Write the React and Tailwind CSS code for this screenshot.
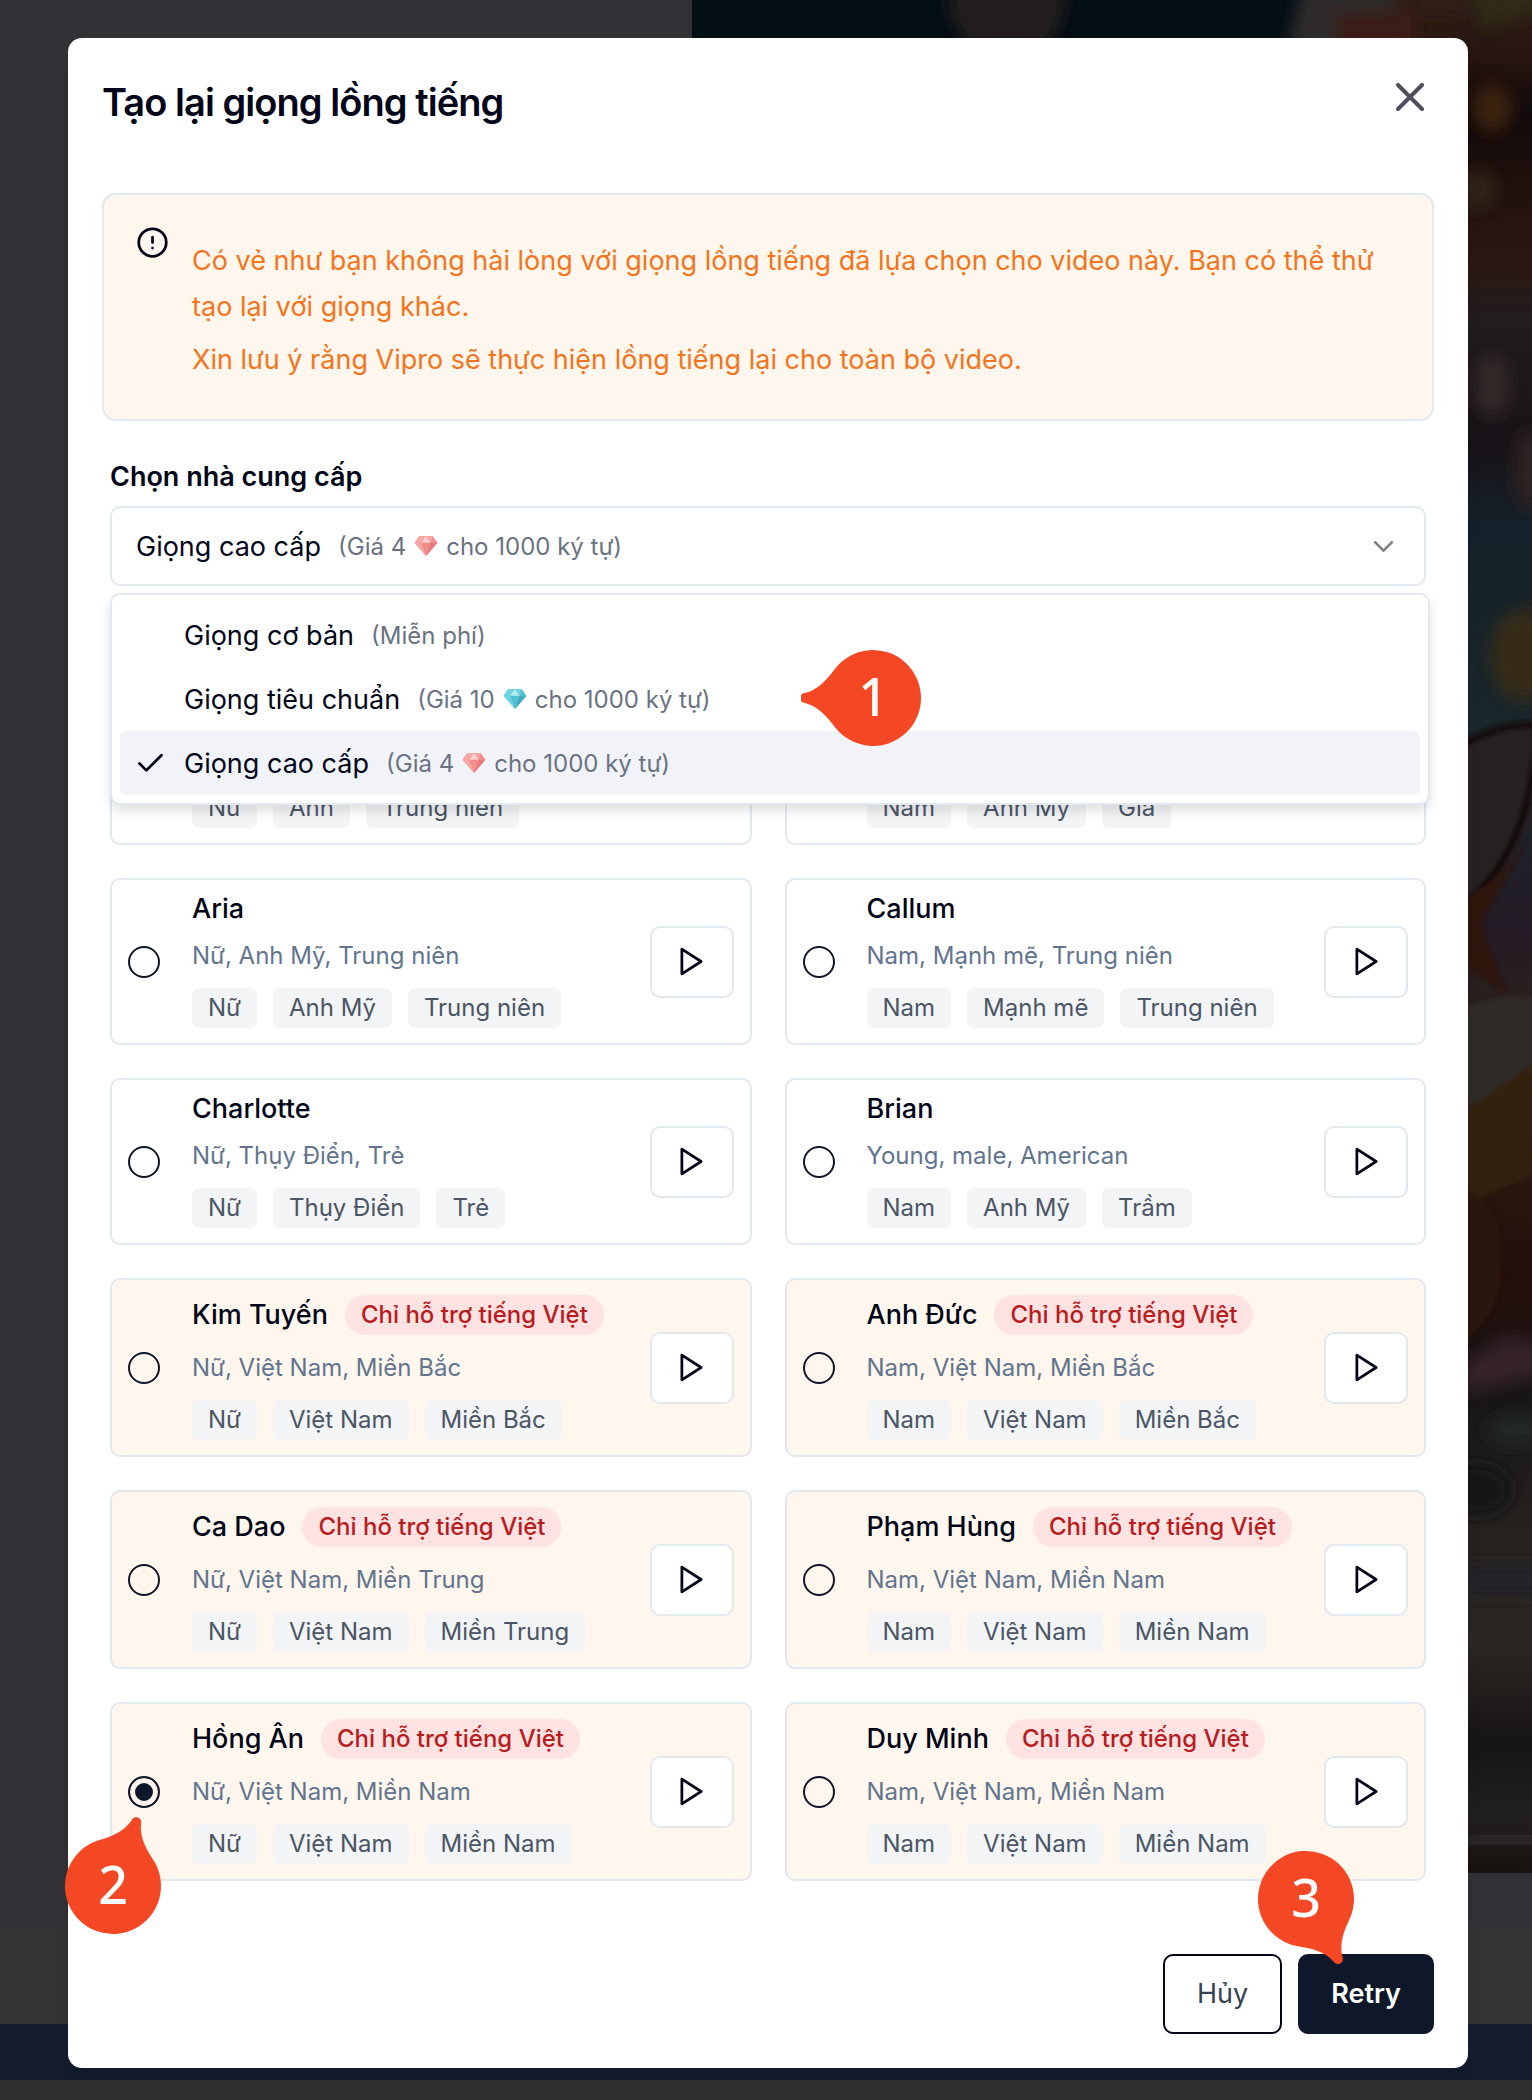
import { useState } from "react";
import { Check, ChevronDown, CircleAlert, X } from "lucide-react";

const VOICES = [
  { id: "v1", tags: ["Nữ", "Anh", "Trung niên"] },
  { id: "v2", tags: ["Nam", "Anh Mỹ", "Già"] },
  { id: "aria", name: "Aria", desc: "Nữ, Anh Mỹ, Trung niên", tags: ["Nữ", "Anh Mỹ", "Trung niên"] },
  { id: "callum", name: "Callum", desc: "Nam, Mạnh mẽ, Trung niên", tags: ["Nam", "Mạnh mẽ", "Trung niên"] },
  { id: "charlotte", name: "Charlotte", desc: "Nữ, Thụy Điển, Trẻ", tags: ["Nữ", "Thụy Điển", "Trẻ"] },
  { id: "brian", name: "Brian", desc: "Young, male, American", tags: ["Nam", "Anh Mỹ", "Trầm"] },
  { id: "kim-tuyen", name: "Kim Tuyến", desc: "Nữ, Việt Nam, Miền Bắc", tags: ["Nữ", "Việt Nam", "Miền Bắc"], viOnly: true },
  { id: "anh-duc", name: "Anh Đức", desc: "Nam, Việt Nam, Miền Bắc", tags: ["Nam", "Việt Nam", "Miền Bắc"], viOnly: true },
  { id: "ca-dao", name: "Ca Dao", desc: "Nữ, Việt Nam, Miền Trung", tags: ["Nữ", "Việt Nam", "Miền Trung"], viOnly: true },
  { id: "pham-hung", name: "Phạm Hùng", desc: "Nam, Việt Nam, Miền Nam", tags: ["Nam", "Việt Nam", "Miền Nam"], viOnly: true },
  { id: "hong-an", name: "Hồng Ân", desc: "Nữ, Việt Nam, Miền Nam", tags: ["Nữ", "Việt Nam", "Miền Nam"], viOnly: true },
  { id: "duy-minh", name: "Duy Minh", desc: "Nam, Việt Nam, Miền Nam", tags: ["Nam", "Việt Nam", "Miền Nam"], viOnly: true },
];

const PROVIDERS = [
  { id: "basic", name: "Giọng cơ bản" },
  { id: "standard", name: "Giọng tiêu chuẩn", price: "10", gem: "cyan" },
  { id: "premium", name: "Giọng cao cấp", price: "4", gem: "pink" },
];

const GEMS = {
  cyan: { light: "#b5eef5", mid: "#6fd3e2", base: "#55bfd2", dark: "#45a9bf" },
  pink: { light: "#fcd0cc", mid: "#f7a8a4", base: "#f28d8a", dark: "#e87b79" },
};

function Gem({ kind }) {
  const c = GEMS[kind];
  return (
    <svg viewBox="0 0 24 21" className="mx-2 inline-block h-5 w-6 align-[-1px]" aria-hidden="true">
      <path d="M5 0h14l5 7-12 14L0 7z" fill={c.base} />
      <path d="M0 7h7l5 14z" fill={c.mid} />
      <path d="M17 7h7L12 21z" fill={c.dark} />
      <path d="M5 0h7L7 7H0z" fill={c.mid} />
      <path d="M12 0l5 7H7z" fill={c.light} />
      <path d="M12 0h7l-2 7z" fill={c.mid} />
    </svg>
  );
}

function ProviderText({ provider }) {
  return (
    <span className="flex items-center gap-[17px] pt-[2px]">
      <span>{provider.name}</span>
      <span className="text-[24px] text-gray-500">
        {provider.gem ? (
          <>
            (Giá {provider.price}
            <Gem kind={provider.gem} />
            cho 1000 ký tự)
          </>
        ) : (
          "(Miễn phí)"
        )}
      </span>
    </span>
  );
}

/* Numbered callout: a 96px disc with a rounded tip, turned by `angle`. */
function Callout({ n, angle, className }) {
  return (
    <span className={"pointer-events-none absolute z-30 flex size-36 items-center justify-center " + className}>
      <svg viewBox="-72 -72 144 144" className="absolute inset-0 size-36" aria-hidden="true">
        <path
          transform={`rotate(${angle})`}
          fill="#f44724"
          d="M-68-5C-56-8-47-17-38-29.3A48 48 0 1 1-38 29.3C-47 17-56 8-68 5A5 5 0 0 1-68-5Z"
        />
      </svg>
      <span className="relative pb-1 font-['Noto_Sans',sans-serif] text-[52px] leading-none font-medium text-white">
        {n}
      </span>
    </span>
  );
}

function VoiceCard({ voice, selected, onSelect, children }) {
  return (
    <div
      className={
        "relative flex items-center rounded-[10px] border-2 border-slate-200 px-4 py-[15px] " +
        (voice.viOnly ? "bg-orange-50" : "bg-white")
      }
    >
      <input
        type="radio"
        name="voice"
        id={voice.id}
        aria-label={voice.name || voice.tags.join(", ")}
        checked={selected}
        onChange={onSelect}
        className="mr-8 size-8 shrink-0 appearance-none rounded-full border-2 border-slate-900 checked:bg-slate-900 checked:shadow-[inset_0_0_0_5px_#fff7ed]"
      />
      <label htmlFor={voice.id} className="flex min-w-0 flex-1 flex-col gap-[15px]">
        <span className="flex min-h-7 items-center gap-[17px]">
          <span className="text-[27px] leading-7 font-medium">{voice.name}</span>
          {voice.viOnly && (
            <span className="rounded-full bg-red-100 px-4 text-[24px] leading-10 font-medium text-[#b91c1c]">
              Chỉ hỗ trợ tiếng Việt
            </span>
          )}
        </span>
        <span className="min-h-[35px] text-[24px] leading-[35px] text-slate-500">{voice.desc}</span>
        <span className="flex gap-4">
          {voice.tags.map((t) => (
            <span key={t} className="rounded-[7px] bg-gray-100 px-4 text-[24px] leading-10 text-gray-600">
              {t}
            </span>
          ))}
        </span>
      </label>
      <button
        type="button"
        aria-label="Nghe thử"
        className="flex h-[72px] w-[84px] shrink-0 items-center justify-center rounded-[10px] border-2 border-slate-200 bg-white"
      >
        <svg viewBox="0 0 24 24" className="size-[33px]" fill="none" stroke="currentColor" strokeWidth="2" strokeLinejoin="round" aria-hidden="true">
          <polygon points="5 3 19 12 5 21 5 3" />
        </svg>
      </button>
      {children}
    </div>
  );
}

function VideoStill() {
  return (
    <svg viewBox="0 0 840 1873" preserveAspectRatio="none" className="ml-auto h-full w-[840px]" aria-hidden="true">
      <defs>
        <filter id="soft" x="-20%" y="-20%" width="140%" height="140%">
          <feGaussianBlur stdDeviation="8" />
        </filter>
        <filter id="slight" x="-20%" y="-20%" width="140%" height="140%">
          <feGaussianBlur stdDeviation="2" />
        </filter>
        <linearGradient id="scene" x1="0" y1="0" x2="0" y2="1">
          <stop offset="0" stopColor="#2e1f15" />
          <stop offset="0.03" stopColor="#261510" />
          <stop offset="0.06" stopColor="#120a0b" />
          <stop offset="0.1" stopColor="#20110d" />
          <stop offset="0.14" stopColor="#2c1813" />
          <stop offset="0.17" stopColor="#211c1d" />
          <stop offset="0.24" stopColor="#181318" />
          <stop offset="0.28" stopColor="#15212a" />
          <stop offset="0.39" stopColor="#1a272b" />
          <stop offset="0.5" stopColor="#241b25" />
          <stop offset="0.56" stopColor="#2e2518" />
          <stop offset="0.68" stopColor="#240e09" />
          <stop offset="0.74" stopColor="#171517" />
          <stop offset="0.82" stopColor="#26221f" />
          <stop offset="0.88" stopColor="#2a2623" />
          <stop offset="0.93" stopColor="#171414" />
          <stop offset="0.97" stopColor="#221f1f" />
          <stop offset="1" stopColor="#18120d" />
        </linearGradient>
      </defs>
      <rect width="840" height="1873" fill="url(#scene)" />
      <rect width="640" height="60" fill="#030e15" />
      <g filter="url(#soft)">
        <path d="M255-20h120q0 60-40 80h-40q-40-20-40-80z" fill="#241c1c" />
        <path d="M590 70l22-90h90v90z" fill="#2f2c2b" />
        <rect x="645" y="12" width="80" height="50" fill="#3a1c15" />
        <rect x="722" y="-20" width="50" height="36" fill="#331c14" />
        <path d="M780-20h70v30l-60 20z" fill="#2f2c19" />
        <ellipse cx="800" cy="108" rx="20" ry="24" fill="#3a210d" />
        <ellipse cx="785" cy="190" rx="20" ry="20" fill="#2e2013" />
        <ellipse cx="800" cy="385" rx="18" ry="32" fill="#312526" />
        <ellipse cx="838" cy="470" rx="16" ry="40" fill="#2d2223" />
        <ellipse cx="832" cy="655" rx="34" ry="46" fill="#362c17" />
      </g>
      <g filter="url(#slight)">
        <path d="M770 745q40-20 70-20v90q-20 60-70 95z" fill="#262021" />
        <path d="M770 745q40-22 74-20v24q-10 110-76 158l6 34 34 46" fill="none" stroke="#140a09" strokeWidth="8" />
        <path d="M770 900q40-20 66-60l-46 80q10 50 30 76l-50-30z" fill="#2f140d" />
        <path d="M770 1010q40-20 80-10v70l-80 40z" fill="#2e2a26" />
        <path d="M770 1115q30-24 70-50v110l-70 30z" fill="#31220f" />
        <path d="M770 1190q40 10 40 70t-40 80z" fill="#2c140b" />
      </g>
      <g filter="url(#soft)">
        <path d="M770 1365l30-20 20-10 30 10v30l-80 20z" fill="#34202a" />
        <ellipse cx="825" cy="1430" rx="30" ry="16" fill="#202526" />
        <ellipse cx="785" cy="1490" rx="35" ry="26" fill="#121419" />
        <path d="M770 1565h80v30h-80z" fill="#232226" />
      </g>
      <rect x="770" y="1835" width="70" height="10" fill="#282625" />
    </svg>
  );
}

function Backdrop() {
  return (
    <div className="absolute inset-0 flex flex-col bg-[#323136]" aria-hidden="true">
      <div className="min-h-0 flex-1">
        <VideoStill />
      </div>
      <div className="h-[54px]" />
      <div className="h-[97px] bg-[#333332]" />
      <div className="h-14 bg-[#131d2e]" />
      <div className="h-5 bg-[#303032]" />
    </div>
  );
}

export default function App() {
  const [voice, setVoice] = useState("hong-an");
  const [provider, setProvider] = useState("premium");
  const current = PROVIDERS.find((p) => p.id === provider);

  return (
    <div className="relative min-h-screen pt-[38px] pr-16 pb-8 pl-[68px] font-[Inter,sans-serif] text-[27px] text-slate-950">
      <Backdrop />
      <div
        role="dialog"
        aria-labelledby="dialog-title"
        className="relative rounded-[14px] bg-white px-[34px] pt-[35px] pb-[34px] shadow-lg"
      >
        <header className="mb-[62px] flex items-start justify-between">
          <h2 id="dialog-title" className="text-[38px] leading-[58px] font-semibold tracking-tight">
            Tạo lại giọng lồng tiếng
          </h2>
          <button type="button" aria-label="Đóng" className="text-slate-950 opacity-70">
            <X className="size-12" strokeWidth={2} />
          </button>
        </header>

        <div role="alert" className="flex gap-[23px] rounded-[14px] border-2 border-slate-200 bg-orange-50 px-8 pt-[31px] pb-9">
          <CircleAlert className="size-[33px] shrink-0" />
          <div className="flex flex-col gap-[7px] pt-3 text-[27px] leading-[46px] text-[#f5741b]">
            <p>
              Có vẻ như bạn không hài lòng với giọng lồng tiếng đã lựa chọn cho video này. Bạn có thể thử tạo lại với
              giọng khác.
            </p>
            <p>Xin lưu ý rằng Vipro sẽ thực hiện lồng tiếng lại cho toàn bộ video.</p>
          </div>
        </div>

        <div className="mt-9 px-2">
          <div id="provider-label" className="mb-[9px] leading-10 font-semibold">
            Chọn nhà cung cấp
          </div>
          <div className="relative">
            <button
              type="button"
              role="combobox"
              aria-expanded="true"
              aria-controls="provider-list"
              aria-labelledby="provider-label"
              className="flex h-20 w-full items-center justify-between rounded-[10px] border-2 border-slate-200 bg-white px-6"
            >
              <ProviderText provider={current} />
              <ChevronDown className="size-[33px] opacity-50" />
            </button>
            <div
              id="provider-list"
              role="listbox"
              aria-labelledby="provider-label"
              className="absolute top-[87px] -right-1 left-0 z-20 rounded-[10px] border-2 border-slate-200 bg-white p-2 shadow-[0_6px_12px_rgba(0,0,0,0.12)]"
            >
              {PROVIDERS.map((p) => (
                <button
                  key={p.id}
                  type="button"
                  role="option"
                  aria-selected={p.id === provider}
                  onClick={() => setProvider(p.id)}
                  className={
                    "flex h-16 w-full items-center gap-[17px] rounded-[7px] pl-[14px] " +
                    (p.id === provider ? "bg-[#f1f3f9]" : "")
                  }
                >
                  <span className="size-[33px]">{p.id === provider && <Check className="size-[33px]" />}</span>
                  <ProviderText provider={p} />
                </button>
              ))}
              <Callout n={1} angle={0} className="top-[31px] left-[689px]" />
            </div>
          </div>

          <div className="mt-[92px] grid grid-cols-2 gap-[33px]">
            {VOICES.map((v) => (
              <VoiceCard key={v.id} voice={v} selected={voice === v.id} onSelect={() => setVoice(v.id)}>
                {v.id === "hong-an" && <Callout n={2} angle={110} className="top-[110px] -left-[71px]" />}
              </VoiceCard>
            ))}
          </div>
        </div>

        <footer className="mt-[73px] flex justify-end gap-4">
          <button type="button" className="h-20 rounded-[10px] border-2 border-slate-950 bg-white px-8 text-gray-700">
            Hủy
          </button>
          <button type="button" className="relative h-20 rounded-[10px] bg-slate-900 px-[33px] font-semibold text-white">
            Retry
            <Callout n={3} angle={242} className="-top-[127px] -left-16" />
          </button>
        </footer>
      </div>
    </div>
  );
}
